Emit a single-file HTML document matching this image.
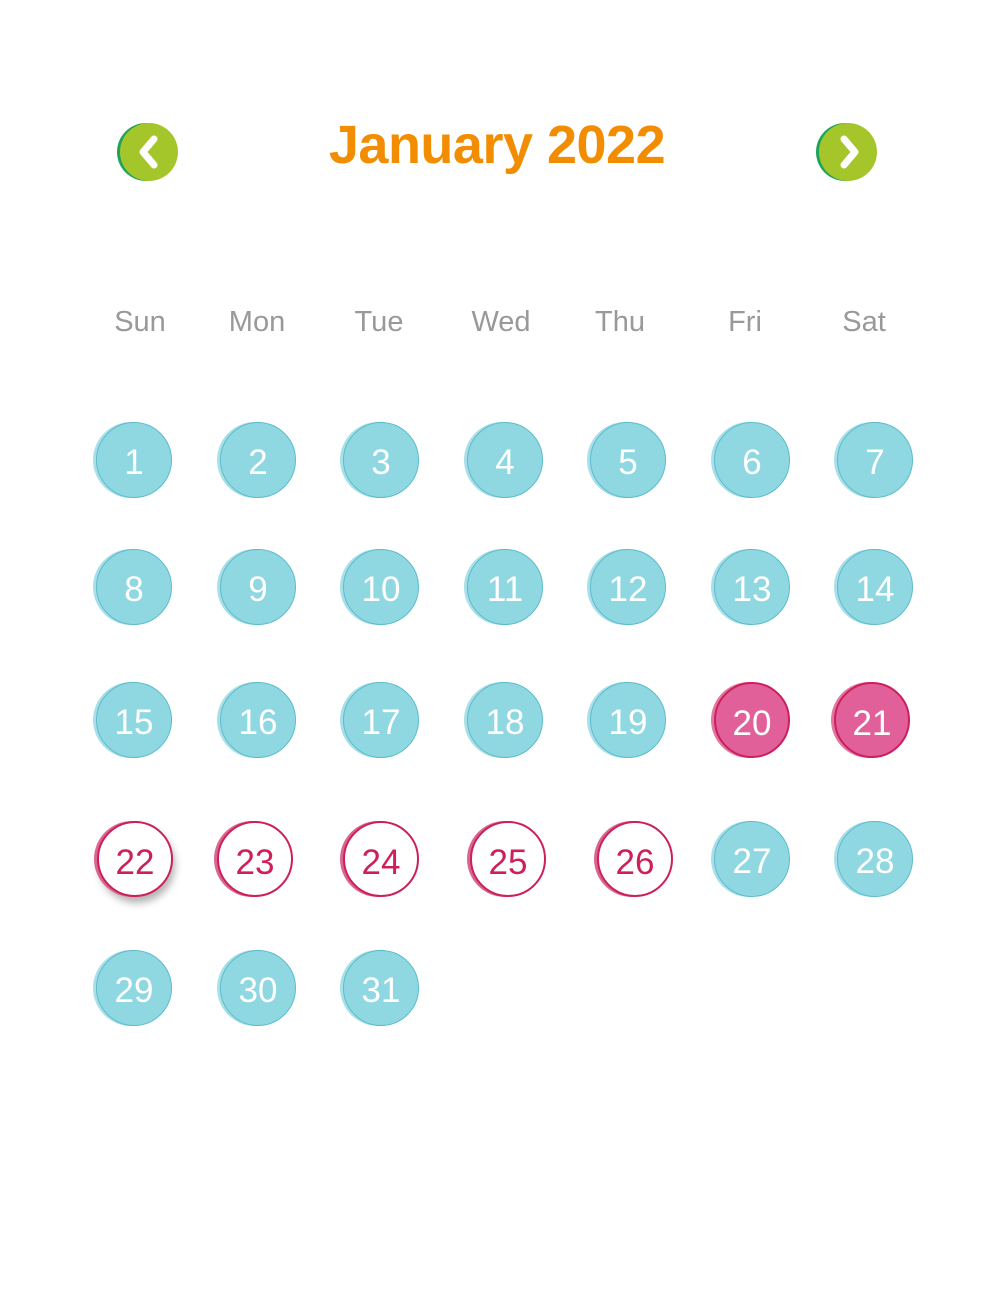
<!DOCTYPE html>
<html><head><meta charset="utf-8"><style>
body{margin:0;width:989px;height:1301px;background:#fff;position:relative;overflow:hidden;font-family:"Liberation Sans",sans-serif}
.t{position:absolute;left:0;width:989px;top:114px;text-align:center;font-size:54px;font-weight:bold;color:#f28c00;letter-spacing:-0.5px;padding-left:5px;box-sizing:border-box}
.nav{position:absolute;width:58px;height:58px;border-radius:50%;background:#a4c62a;box-shadow:-3px 0 0 #1fa35a}
.d{position:absolute;transform:translateX(-50%);top:306px;font-size:29px;color:#999}
.c{position:absolute;width:76px;height:76px;border-radius:50%;box-sizing:border-box;text-align:center;line-height:80px;font-size:35px;color:#fff;margin:-38px 0 0 -38px}
.b{background:#8fd8e2;border:1.5px solid #5bbccc;box-shadow:-3px 0 0 #a9dfe8}
.p{background:#e2609a;border:2px solid #cc1f5c;box-shadow:-3px 0 0 #e0779f}
.o{background:#fff;border:2px solid #cc1f5c;color:#cc1f5c;box-shadow:-3px 0 0 #d96690}
</style></head><body>
<div class="nav" style="left:120px;top:123px"><svg width="58" height="58"><path d="M34 16 L23 29 L34 42" stroke="#fff" stroke-width="7" fill="none" stroke-linecap="round" stroke-linejoin="round"/></svg></div>
<div class="t">January 2022</div>
<div class="nav" style="left:819px;top:123px"><svg width="58" height="58"><path d="M25 16 L36 29 L25 42" stroke="#fff" stroke-width="7" fill="none" stroke-linecap="round" stroke-linejoin="round"/></svg></div>
<div class="d" style="left:140px">Sun</div><div class="d" style="left:257px">Mon</div><div class="d" style="left:379px">Tue</div><div class="d" style="left:501px">Wed</div><div class="d" style="left:620px">Thu</div><div class="d" style="left:745px">Fri</div><div class="d" style="left:864px">Sat</div>
<div class="c b" style="left:134px;top:460px">1</div><div class="c b" style="left:258px;top:460px">2</div><div class="c b" style="left:381px;top:460px">3</div><div class="c b" style="left:505px;top:460px">4</div><div class="c b" style="left:628px;top:460px">5</div><div class="c b" style="left:752px;top:460px">6</div><div class="c b" style="left:875px;top:460px">7</div>
<div class="c b" style="left:134px;top:587px">8</div><div class="c b" style="left:258px;top:587px">9</div><div class="c b" style="left:381px;top:587px">10</div><div class="c b" style="left:505px;top:587px">11</div><div class="c b" style="left:628px;top:587px">12</div><div class="c b" style="left:752px;top:587px">13</div><div class="c b" style="left:875px;top:587px">14</div>
<div class="c b" style="left:134px;top:720px">15</div><div class="c b" style="left:258px;top:720px">16</div><div class="c b" style="left:381px;top:720px">17</div><div class="c b" style="left:505px;top:720px">18</div><div class="c b" style="left:628px;top:720px">19</div><div class="c p" style="left:752px;top:720px">20</div><div class="c p" style="left:872px;top:720px">21</div>
<div class="c o" style="left:135px;top:859px;box-shadow:-3px 0 0 #d96690,2px 6px 8px rgba(0,0,0,.3)">22</div><div class="c o" style="left:255px;top:859px">23</div><div class="c o" style="left:381px;top:859px">24</div><div class="c o" style="left:508px;top:859px">25</div><div class="c o" style="left:635px;top:859px">26</div><div class="c b" style="left:752px;top:859px">27</div><div class="c b" style="left:875px;top:859px">28</div>
<div class="c b" style="left:134px;top:988px">29</div><div class="c b" style="left:258px;top:988px">30</div><div class="c b" style="left:381px;top:988px">31</div>
</body></html>
